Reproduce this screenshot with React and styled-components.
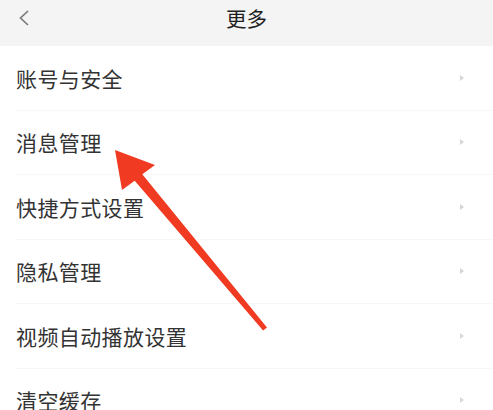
import React from 'react';
import styled, { createGlobalStyle } from 'styled-components';

const GlobalStyle = createGlobalStyle`
  html, body {
    margin: 0;
    padding: 0;
    background: #fff;
  }
  body {
    font-family: "Noto Sans CJK SC", "Noto Sans", sans-serif;
  }
`;

const items = [
  '账号与安全',
  '消息管理',
  '快捷方式设置',
  '隐私管理',
  '视频自动播放设置',
  '清空缓存',
];

const Page = styled.div`
  position: relative;
  width: 493px;
  height: 410px;
  overflow: hidden;
  background: #fff;
`;

const Header = styled.div`
  height: 46px;
  background: #f4f4f4;
  display: flex;
  align-items: center;
  justify-content: center;
  position: relative;
`;

const Back = styled.div`
  position: absolute;
  left: 16px;
  top: 8px;
  width: 16px;
  height: 20px;
  display: flex;
`;

const Title = styled.div`
  font-size: 20.5px;
  color: #1f1f1f;
  line-height: 1;
  margin-top: -9px;
`;

const List = styled.div`
  display: flex;
  flex-direction: column;
`;

const Row = styled.div`
  height: 64.5px;
  box-sizing: border-box;
  margin-left: 16px;
  padding-right: 29px;
  display: flex;
  align-items: center;
  justify-content: space-between;
  border-bottom: 1px solid ${p => (p.$last ? 'transparent' : '#f7f7f7')};
`;

const Label = styled.span`
  font-size: 21px;
  color: #333;
  letter-spacing: 0.4px;
`;

const Caret = styled.span`
  width: 0;
  height: 0;
  border-top: 3.5px solid transparent;
  border-bottom: 3.5px solid transparent;
  border-left: 4.5px solid #d6d6d6;
`;

const Overlay = styled.svg`
  position: absolute;
  left: 0;
  top: 0;
  pointer-events: none;
`;

export default function App() {
  return (
    <Page>
      <GlobalStyle />
      <Header>
        <Back>
          <svg width="16" height="20" viewBox="0 0 16 20">
            <path d="M12 3 L4.5 10 L12 17" fill="none" stroke="#777" strokeWidth="1.6" />
          </svg>
        </Back>
        <Title>更多</Title>
      </Header>
      <List>
        {items.map((t, i) => (
          <Row key={t} $last={i === items.length - 1}>
            <Label>{t}</Label>
            <Caret />
          </Row>
        ))}
      </List>
      <Overlay width="493" height="410" viewBox="0 0 493 410">
        <polygon
          points="115,150 155,165 142.3,174.3 267,327.4 263.1,330.6 134.7,180.7 122,190"
          fill="#f03b22"
          strokeLinejoin="round"
        />
      </Overlay>
    </Page>
  );
}
